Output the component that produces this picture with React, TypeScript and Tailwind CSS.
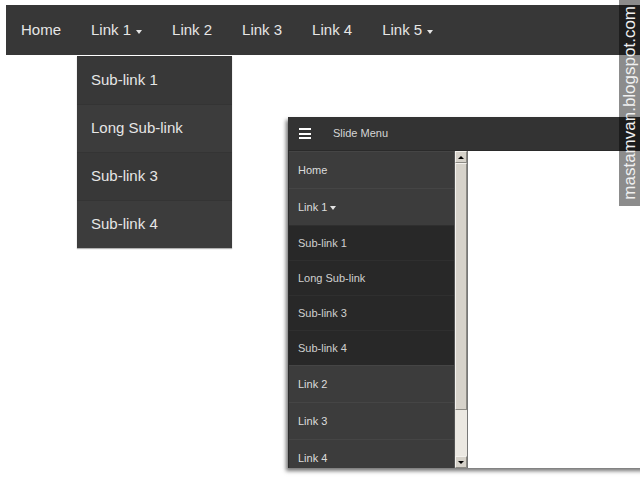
import React from 'react';

const topLinks = [
  { label: 'Home' },
  { label: 'Link 1', drop: true },
  { label: 'Link 2' },
  { label: 'Link 3' },
  { label: 'Link 4' },
  { label: 'Link 5', drop: true },
];

const subLinks = ['Sub-link 1', 'Long Sub-link', 'Sub-link 3', 'Sub-link 4'];

function Caret({ className = '' }: { className?: string }) {
  return (
    <span
      className={`inline-block w-0 h-0 border-l-[3px] border-r-[3px] border-t-[4px] border-l-transparent border-r-transparent border-t-[#e4e4e4] ${className}`}
    />
  );
}

function TopNav() {
  return (
    <div className="ml-[6px] mt-[5px] h-[50px] bg-[#373737] flex items-stretch">
      {topLinks.map((l) => (
        <div key={l.label} className="relative flex items-center px-[15px] text-[15px] text-[#e6e6e6]">
          <span>{l.label}</span>
          {l.drop && <Caret className="ml-[5px] mt-[3px]" />}
          {l.label === 'Link 1' && (
            <div className="absolute top-[51px] left-[1px] w-[155px] bg-[#3a3a3a] shadow-[0_1px_1px_rgba(0,0,0,0.3)]">
              {subLinks.map((s, i) => (
                <div
                  key={s}
                  className={`h-[48px] flex items-center pl-[14px] text-[15px] text-[#e6e6e6] ${
                    i % 2 === 0 ? 'bg-[#383838]' : 'bg-[#3c3c3c]'
                  } border-t border-[#343434]`}
                >
                  {s}
                </div>
              ))}
            </div>
          )}
        </div>
      ))}
    </div>
  );
}

type Row = { label: string; sub?: boolean; drop?: boolean };

const slideRows: Row[] = [
  { label: 'Home' },
  { label: 'Link 1', drop: true },
  { label: 'Sub-link 1', sub: true },
  { label: 'Long Sub-link', sub: true },
  { label: 'Sub-link 3', sub: true },
  { label: 'Sub-link 4', sub: true },
  { label: 'Link 2' },
  { label: 'Link 3' },
  { label: 'Link 4' },
];

function ScrollArrow({ up }: { up?: boolean }) {
  return (
    <div className="h-[12px] bg-[#d6d2ca] border border-[#f4f2ee] border-r-[#8c8a84] border-b-[#8c8a84] flex items-center justify-center">
      <span
        className={`w-0 h-0 border-l-[3px] border-r-[3px] border-l-transparent border-r-transparent ${
          up ? 'border-b-[3px] border-b-black' : 'border-t-[3px] border-t-black'
        }`}
      />
    </div>
  );
}

function SlideWindow() {
  return (
    <div className="ml-[288px] mt-[62px] w-[360px] h-[351px] flex flex-col bg-white shadow-[-2px_3px_4px_rgba(0,0,0,0.55)]">
      {/* Header */}
      <div className="h-[34px] shrink-0 bg-[#333333] border-b border-[#2a2a2a] flex items-center">
        <div className="ml-[11px] flex flex-col gap-[2.5px]">
          <span className="block w-[12px] h-[2px] bg-white" />
          <span className="block w-[12px] h-[2px] bg-white" />
          <span className="block w-[12px] h-[2px] bg-white" />
        </div>
        <span className="ml-[22px] text-[11px] text-[#d6d6d6]">Slide Menu</span>
      </div>

      <div className="flex-1 flex min-h-0">
        {/* Menu */}
        <div className="w-[166px] overflow-hidden bg-[#3b3b3b] border-l border-[#2c2c2c]">
          {slideRows.map((r) => (
            <div
              key={r.label}
              className={`flex items-center pl-[9px] text-[11px] ${
                r.sub
                  ? 'h-[35px] bg-[#282828] border-t border-[#2f2f2f] text-[#d0d0d0]'
                  : 'h-[37px] bg-[#3c3c3c] border-t border-[#454545] text-[#dcdcdc]'
              }`}
            >
              <span>{r.label}</span>
              {r.drop && <Caret className="ml-[3px] mt-[2px] border-l-[2.5px] border-r-[2.5px] border-t-[3px]" />}
            </div>
          ))}
        </div>

        {/* Scrollbar */}
        <div className="w-[13px] flex flex-col bg-[#ebe8e2] border-l border-[#555]">
          <ScrollArrow up />
          <div className="h-[247px] bg-[#d6d2ca] border border-[#f4f2ee] border-r-[#8c8a84] border-b-[#8c8a84]" />
          <div className="flex-1" />
          <ScrollArrow />
        </div>

        {/* Content */}
        <div className="flex-1 bg-white border-l border-[#777]" />
      </div>
    </div>
  );
}

export default function App() {
  return (
    <div className="relative w-[640px] h-[492px] overflow-hidden bg-white font-[family-name:'Liberation_Sans',Arial,sans-serif]">
      <TopNav />
      <SlideWindow />

      {/* Watermark */}
      <div className="absolute top-0 right-0 w-[21px] h-[206px] bg-[rgba(0,0,0,0.45)] flex items-center justify-center">
        <span className="[writing-mode:vertical-rl] rotate-180 text-[17px] leading-none text-[#f0f0f0]">
          mastamvan.blogspot.com
        </span>
      </div>
    </div>
  );
}
